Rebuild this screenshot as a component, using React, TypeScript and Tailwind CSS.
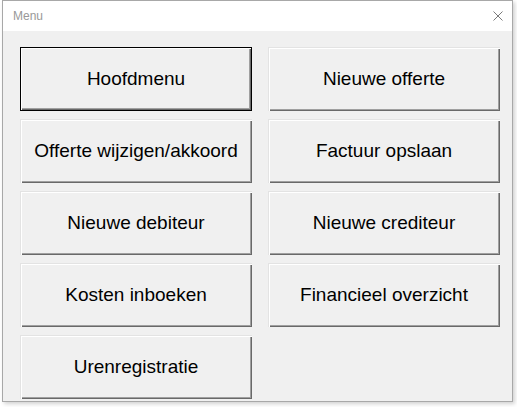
const items = [
  'Hoofdmenu',
  'Nieuwe offerte',
  'Offerte wijzigen/akkoord',
  'Factuur opslaan',
  'Nieuwe debiteur',
  'Nieuwe crediteur',
  'Kosten inboeken',
  'Financieel overzicht',
  'Urenregistratie',
];

function MenuButton({ label, focused }: { label: string; focused?: boolean }) {
  const face = focused
    ? 'border border-black shadow-[inset_1px_1px_0_#ffffff,inset_-1px_-1px_0_#696969,inset_-2px_-2px_0_#a0a0a0]'
    : 'shadow-[inset_1px_1px_0_#e3e3e3,inset_2px_2px_0_#ffffff,inset_-1px_-1px_0_#696969,inset_-2px_-2px_0_#a0a0a0]';
  return (
    <button
      type="button"
      className={`flex h-[64px] w-[232px] items-center justify-center bg-[#f0f0f0] text-[19px] text-black font-['Liberation_Sans',Arial,sans-serif] ${face}`}
    >
      {label}
    </button>
  );
}

export default function App() {
  return (
    <div className="h-[407px] w-[517px] bg-white">
      <div className="ml-[2px] flex h-[402px] w-[511px] flex-col border border-[#a8a8a8] shadow-[2px_2px_4px_rgba(0,0,0,0.18)]">
        <div className="flex h-[30px] shrink-0 items-center justify-between bg-white pl-[10px] pr-[9px]">
          <span className="text-[12px] text-[#999999] font-['Liberation_Sans',Arial,sans-serif]">Menu</span>
          <svg width="10" height="10" viewBox="0 0 10 10" className="mb-[1px]">
            <path d="M0.5 0.5 L9.5 9.5 M9.5 0.5 L0.5 9.5" stroke="#7a7a7a" strokeWidth="1" fill="none" />
          </svg>
        </div>
        <div className="flex-1 bg-[#f0f0f0] pl-[17px] pt-[16px]">
          <div className="grid grid-cols-[232px_232px] gap-x-[16px] gap-y-[8px]">
            {items.map((label, i) => (
              <MenuButton key={label} label={label} focused={i === 0} />
            ))}
          </div>
        </div>
      </div>
    </div>
  );
}
